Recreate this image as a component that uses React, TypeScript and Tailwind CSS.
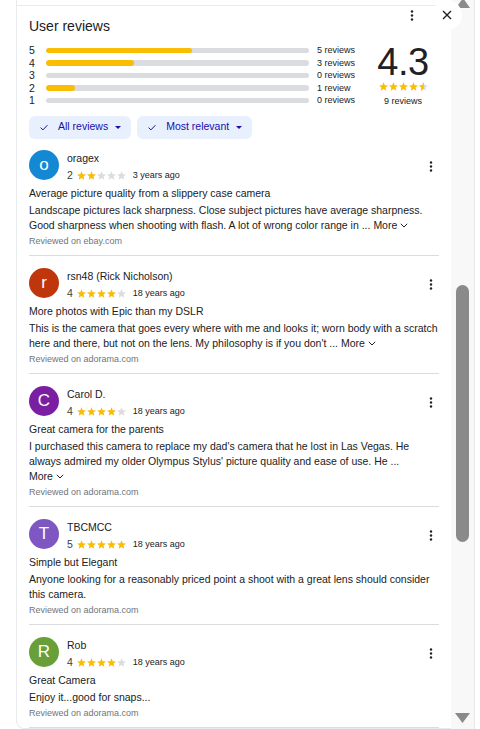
import React from "react";

const STAR =
  "M12 17.27L18.18 21l-1.64-7.03L22 9.24l-7.19-.61L12 2 9.19 8.63 2 9.24l5.46 4.73L5.82 21z";

type Fill = "full" | "empty" | "half";

function Star({ fill }: { fill: Fill }) {
  return (
    <svg width={9} height={9} viewBox="2 2 20 19.3" className="block shrink-0">
      {fill === "half" ? (
        <>
          <defs>
            <clipPath id="halfclip">
              <rect x="0" y="0" width="12.5" height="24" />
            </clipPath>
          </defs>
          <path d={STAR} fill="#dadce0" />
          <path d={STAR} fill="#fbbc04" clipPath="url(#halfclip)" />
        </>
      ) : (
        <path d={STAR} fill={fill === "full" ? "#fbbc04" : "#dadce0"} />
      )}
    </svg>
  );
}

function Stars({ fills }: { fills: Fill[] }) {
  return (
    <div className="flex items-center gap-[1px]">
      {fills.map((f, i) => (
        <Star key={i} fill={f} />
      ))}
    </div>
  );
}

function Dots() {
  return (
    <svg width="4" height="11" viewBox="0 0 4 11" className="block">
      <circle cx="2" cy="1.5" r="1.2" fill="#202124" />
      <circle cx="2" cy="5.5" r="1.2" fill="#202124" />
      <circle cx="2" cy="9.5" r="1.2" fill="#202124" />
    </svg>
  );
}

function Check() {
  return (
    <svg width="8" height="7" viewBox="0 0 8 7" className="block">
      <path d="M0.6 3.6 L2.9 5.9 L7.4 1.2" fill="none" stroke="#1a0dab" strokeWidth="1" />
    </svg>
  );
}

function Caret() {
  return (
    <svg width="6" height="3" viewBox="0 0 6 3" className="block">
      <path d="M0 0 L6 0 L3 3 Z" fill="#1a0dab" />
    </svg>
  );
}

function More() {
  return (
    <span className="whitespace-nowrap">
      More
      <svg width="8" height="5" viewBox="0 0 8 5" className="inline-block ml-[3px] align-middle">
        <path d="M0.8 0.8 L4 4 L7.2 0.8" fill="none" stroke="#202124" strokeWidth="1" />
      </svg>
    </span>
  );
}

type Review = {
  name: string;
  letter: string;
  color: string;
  rating: number;
  ago: string;
  title: string;
  body: string;
  more: boolean;
  moreBreak?: boolean;
  site: string;
};

const reviews: Review[] = [
  {
    name: "oragex",
    letter: "o",
    color: "bg-[#1488d2]",
    rating: 2,
    ago: "3 years ago",
    title: "Average picture quality from a slippery case camera",
    body: "Landscape pictures lack sharpness. Close subject pictures have average sharpness. Good sharpness when shooting with flash. A lot of wrong color range in ... ",
    more: true,
    site: "ebay.com",
  },
  {
    name: "rsn48 (Rick Nicholson)",
    letter: "r",
    color: "bg-[#bf360c]",
    rating: 4,
    ago: "18 years ago",
    title: "More photos with Epic than my DSLR",
    body: "This is the camera that goes every where with me and looks it; worn body with a scratch here and there, but not on the lens. My philosophy is if you don't ... ",
    more: true,
    site: "adorama.com",
  },
  {
    name: "Carol D.",
    letter: "C",
    color: "bg-[#7b1fa2]",
    rating: 4,
    ago: "18 years ago",
    title: "Great camera for the parents",
    body: "I purchased this camera to replace my dad's camera that he lost in Las Vegas. He always admired my older Olympus Stylus' picture quality and ease of use. He ...",
    more: true,
    moreBreak: true,
    site: "adorama.com",
  },
  {
    name: "TBCMCC",
    letter: "T",
    color: "bg-[#7e57c2]",
    rating: 5,
    ago: "18 years ago",
    title: "Simple but Elegant",
    body: "Anyone looking for a reasonably priced point a shoot with a great lens should consider this camera.",
    more: false,
    site: "adorama.com",
  },
  {
    name: "Rob",
    letter: "R",
    color: "bg-[#689f38]",
    rating: 4,
    ago: "18 years ago",
    title: "Great Camera",
    body: "Enjoy it...good for snaps...",
    more: false,
    site: "adorama.com",
  },
];

const bars = [
  { n: "5", pct: 5 / 9, label: "5 reviews" },
  { n: "4", pct: 3 / 9, label: "3 reviews" },
  { n: "3", pct: 0, label: "0 reviews" },
  { n: "2", pct: 1 / 9, label: "1 review" },
  { n: "1", pct: 0, label: "0 reviews" },
];

function ReviewItem({ r, first }: { r: Review; first: boolean }) {
  const fills: Fill[] = [0, 1, 2, 3, 4].map((i) => (i < r.rating ? "full" : "empty"));
  return (
    <div className={`${first ? "pt-[11px]" : "pt-[12px]"} pb-[7px] border-b border-[#dadce0]`}>
      <div className="flex items-start">
        <div
          className={`w-[30px] h-[30px] rounded-full ${r.color} flex items-center justify-center text-white text-[17px] leading-none shrink-0`}
        >
          {r.letter}
        </div>
        <div className="ml-[8px] pt-[1px] flex-1 flex flex-col">
          <div className="text-[10.5px] leading-[15px]">{r.name}</div>
          <div className="mt-[2px] h-[15px] flex items-center">
            <span className="text-[10.5px] leading-[15px] text-[#3c4043]">{r.rating}</span>
            <div className="ml-[4px]">
              <Stars fills={fills} />
            </div>
            <span className="ml-[7px] text-[9px] leading-[15px]">{r.ago}</span>
          </div>
        </div>
        <div className="w-[16px] h-[33px] flex items-center justify-center shrink-0">
          <Dots />
        </div>
      </div>
      <div className="mt-[3px] text-[10.5px] leading-[15px]">{r.title}</div>
      <div className="mt-[2px] text-[10.5px] leading-[15px]">
        {r.body}
        {r.moreBreak && <br />}
        {r.more && <More />}
      </div>
      <div className="mt-[1px] text-[9px] leading-[14px] text-[#70757a]">Reviewed on {r.site}</div>
    </div>
  );
}

export default function App() {
  return (
    <div className="w-[480px] h-[729px] bg-white flex overflow-hidden relative font-['Liberation_Sans',Arial,sans-serif] text-[#202124]">
      <div className="w-[16px] shrink-0" />
      <div className="w-[435px] shrink-0 h-full flex flex-col">
        <div className="h-[5px] shrink-0 border-l border-[#e8eaed]" />
        <div className="flex-1 min-h-0 border-l border-t border-b border-[#e8eaed] rounded-bl-[8px] overflow-hidden pl-[12px] pr-[12px]">
          <div className="pt-[10px] text-[14px] leading-[20px]">User reviews</div>

          <div className="mt-[8px] flex">
            <div className="w-[339px] flex flex-col">
              {bars.map((b) => (
                <div key={b.n} className="h-[12.5px] flex items-center">
                  <div className="w-[17px] text-[10.5px] leading-[12.5px]">{b.n}</div>
                  <div className="w-[263px] h-[5.5px] rounded-full bg-[#dadce0] overflow-hidden">
                    <div className="h-full rounded-full bg-[#fbbc04]" style={{ width: `${b.pct * 100}%` }} />
                  </div>
                  <div className="ml-[8px] text-[9px] leading-[12.5px] whitespace-nowrap">{b.label}</div>
                </div>
              ))}
            </div>
            <div className="w-[70px] h-[62px] flex flex-col items-center">
              <div className="mt-[1px] text-[38px] leading-[34px] tracking-[-0.5px]">4.3</div>
              <div className="mt-[3px]">
                <Stars fills={["full", "full", "full", "full", "half"]} />
              </div>
              <div className="mt-[4px] text-[9px] leading-[12px] whitespace-nowrap">9 reviews</div>
            </div>
          </div>

          <div className="mt-[9px] flex gap-[6px]">
            {["All reviews", "Most relevant"].map((t) => (
              <div
                key={t}
                className="h-[23px] rounded-[6px] bg-[#e8f0fe] flex items-center pl-[11px] pr-[10px] text-[10.5px] text-[#1a0dab]"
              >
                <Check />
                <span className="ml-[10px]">{t}</span>
                <span className="ml-[7px]">
                  <Caret />
                </span>
              </div>
            ))}
          </div>

          <div>
            {reviews.map((r, i) => (
              <ReviewItem key={r.name} r={r} first={i === 0} />
            ))}
          </div>
        </div>
      </div>

      <div className="w-[24px] shrink-0 h-full bg-[#f8f8f8] border-r border-[#e8e8e8] flex flex-col items-center">
        <svg width="14" height="10" viewBox="0 0 14 10" className="block mt-[-2px] shrink-0">
          <path d="M7 0 L14 10 L0 10 Z" fill="#8a8a8a" />
        </svg>
        <div className="mt-[277px] w-[13px] h-[257px] rounded-full bg-[#8a8a8a] shrink-0" />
        <div className="flex-1" />
        <svg width="15" height="10" viewBox="0 0 15 10" className="block mb-[6px] shrink-0">
          <path d="M0 0 L15 0 L7.5 10 Z" fill="#8a8a8a" />
        </svg>
      </div>

      <div className="absolute left-[410px] top-[10px]">
        <Dots />
      </div>
      <div className="absolute left-[432px] top-[0px] w-[30px] h-[30px] rounded-full bg-white flex items-center justify-center">
        <svg width="10" height="10" viewBox="0 0 10 10" className="block">
          <path d="M1 1 L9 9 M9 1 L1 9" stroke="#202124" strokeWidth="1.4" />
        </svg>
      </div>
    </div>
  );
}
